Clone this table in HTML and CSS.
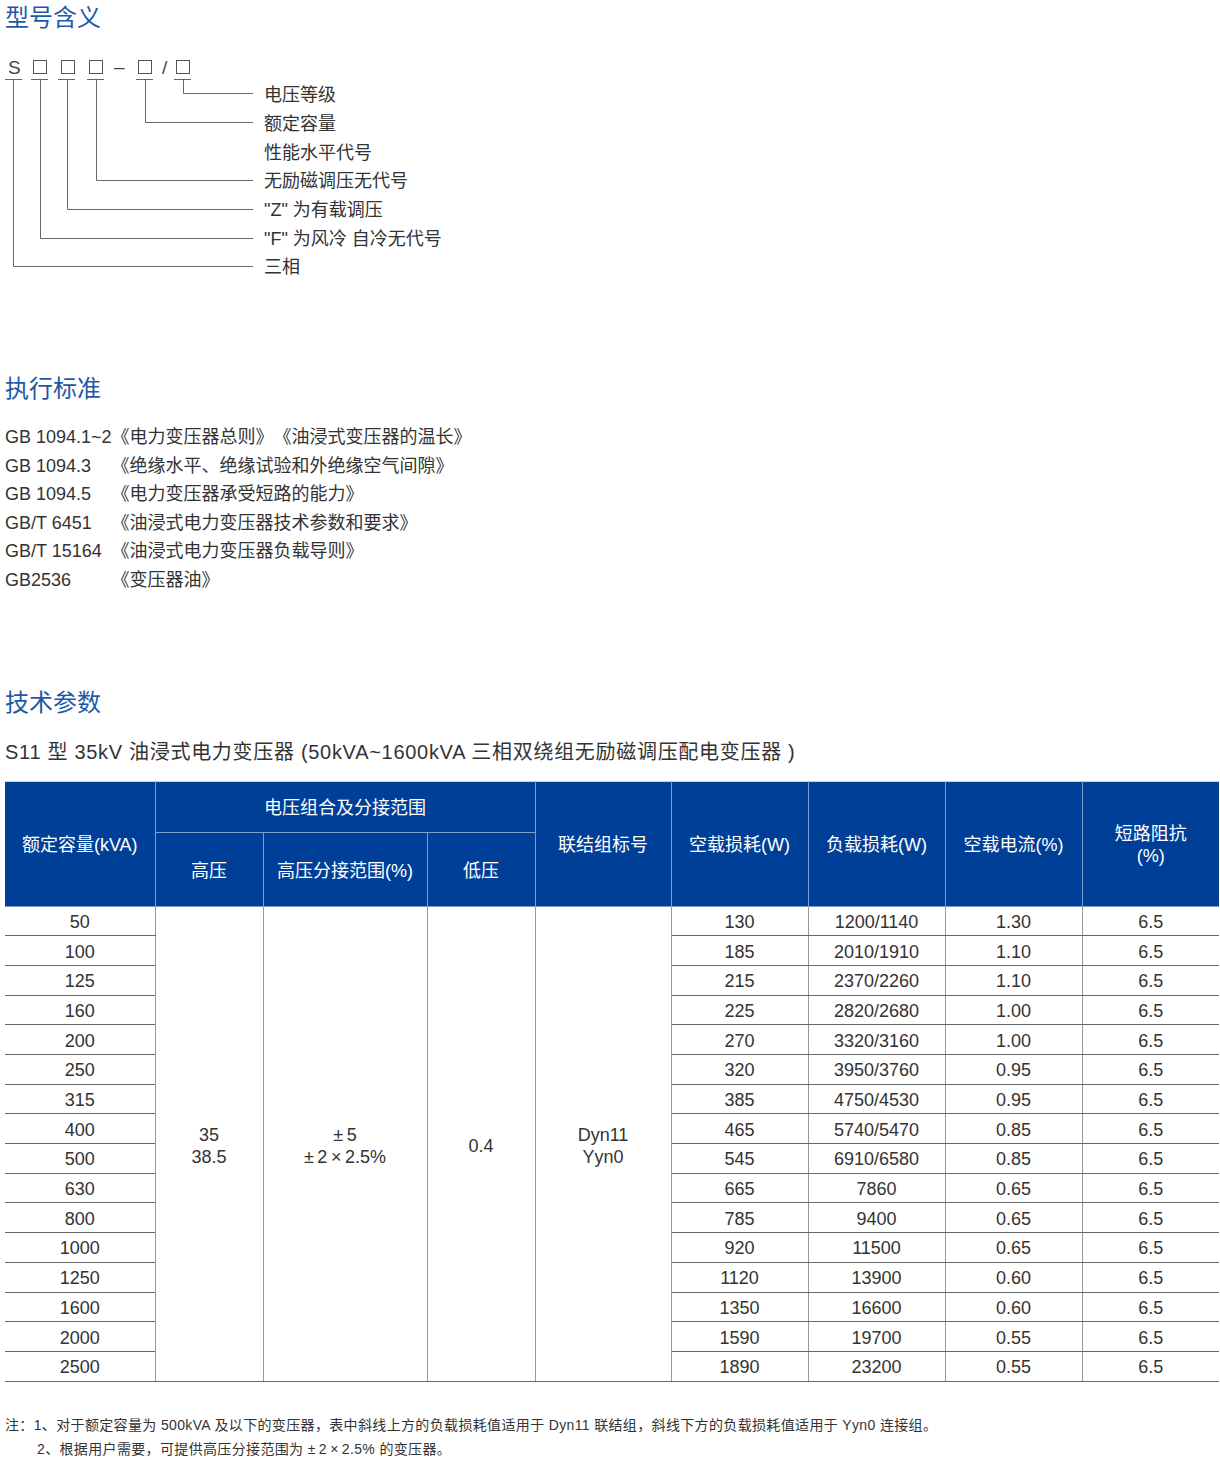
FILE: index.html
```html
<!DOCTYPE html>
<html lang="zh-CN">
<head>
<meta charset="utf-8">
<title>S11 型 35kV 油浸式电力变压器</title>
<link rel="stylesheet" href="styles.css">
</head>
<body>
<section class="sec">
  <h2 class="title">型号含义</h2>
  <svg class="diagram" width="460" height="250" viewBox="5 36 460 250" xmlns="http://www.w3.org/2000/svg">
    <g class="sym">
      <text x="8" y="74">S</text>
      <text x="114" y="73">–</text>
      <text x="162" y="74">/</text>
    </g>
    <g class="box" fill="none" stroke="#555" stroke-width="1">
      <rect x="33.5" y="60.5" width="13" height="13"/>
      <rect x="61.5" y="60.5" width="13" height="13"/>
      <rect x="89.5" y="60.5" width="13" height="13"/>
      <rect x="138.5" y="60.5" width="13" height="13"/>
      <rect x="176.5" y="60.5" width="13" height="13"/>
    </g>
    <g fill="none" stroke="#666" stroke-width="1">
      <path d="M5 79.5H22M31 79.5H48M58 79.5H75M87 79.5H104M136 79.5H153M174 79.5H191"/>
      <path d="M183.5 79V93.5H253"/>
      <path d="M145.5 79V122.5H253"/>
      <path d="M96.5 79V180.5H253"/>
      <path d="M67.5 79V209.5H253"/>
      <path d="M40.5 79V238.5H253"/>
      <path d="M13.5 79V266.5H253"/>
    </g>
    <g class="lbl">
      <text x="264" y="101">电压等级</text>
      <text x="264" y="130">额定容量</text>
      <text x="264" y="159">性能水平代号</text>
      <text x="264" y="187">无励磁调压无代号</text>
      <text x="264" y="216">"Z" 为有载调压</text>
      <text x="264" y="245">"F" 为风冷 自冷无代号</text>
      <text x="264" y="273">三相</text>
    </g>
  </svg>
</section>

<section class="sec sec-std">
  <h2 class="title">执行标准</h2>
  <div class="std">
    <span>GB 1094.1~2</span><span>《电力变压器总则》《油浸式变压器的温长》</span>
    <span>GB 1094.3</span><span>《绝缘水平、绝缘试验和外绝缘空气间隙》</span>
    <span>GB 1094.5</span><span>《电力变压器承受短路的能力》</span>
    <span>GB/T 6451</span><span>《油浸式电力变压器技术参数和要求》</span>
    <span>GB/T 15164</span><span>《油浸式电力变压器负载导则》</span>
    <span>GB2536</span><span>《变压器油》</span>
  </div>
</section>

<section class="sec sec-tech">
  <h2 class="title">技术参数</h2>
  <p class="subtitle">S11 型 35kV 油浸式电力变压器 (50kVA~1600kVA 三相双绕组无励磁调压配电变压器 )</p>
  <table class="spec">
    <colgroup>
      <col style="width:150px"><col style="width:108px"><col style="width:164px"><col style="width:108px"><col style="width:136px"><col style="width:137px"><col style="width:137px"><col style="width:137px"><col style="width:137px">
    </colgroup>
    <thead>
      <tr class="h1">
        <th rowspan="2">额定容量(kVA)</th>
        <th colspan="3">电压组合及分接范围</th>
        <th rowspan="2">联结组标号</th>
        <th rowspan="2">空载损耗(W)</th>
        <th rowspan="2">负载损耗(W)</th>
        <th rowspan="2">空载电流(%)</th>
        <th rowspan="2">短路阻抗<br>(%)</th>
      </tr>
      <tr class="h2">
        <th>高压</th>
        <th>高压分接范围(%)</th>
        <th>低压</th>
      </tr>
    </thead>
    <tbody>
      <tr><td>50</td><td rowspan="16" class="m">35<br>38.5</td><td rowspan="16" class="m">±&thinsp;5<br>±&thinsp;2&thinsp;×&thinsp;2.5%</td><td rowspan="16" class="m">0.4</td><td rowspan="16" class="m">Dyn11<br>Yyn0</td><td>130</td><td>1200/1140</td><td>1.30</td><td>6.5</td></tr>
      <tr><td>100</td><td>185</td><td>2010/1910</td><td>1.10</td><td>6.5</td></tr>
      <tr><td>125</td><td>215</td><td>2370/2260</td><td>1.10</td><td>6.5</td></tr>
      <tr><td>160</td><td>225</td><td>2820/2680</td><td>1.00</td><td>6.5</td></tr>
      <tr><td>200</td><td>270</td><td>3320/3160</td><td>1.00</td><td>6.5</td></tr>
      <tr><td>250</td><td>320</td><td>3950/3760</td><td>0.95</td><td>6.5</td></tr>
      <tr><td>315</td><td>385</td><td>4750/4530</td><td>0.95</td><td>6.5</td></tr>
      <tr><td>400</td><td>465</td><td>5740/5470</td><td>0.85</td><td>6.5</td></tr>
      <tr><td>500</td><td>545</td><td>6910/6580</td><td>0.85</td><td>6.5</td></tr>
      <tr><td>630</td><td>665</td><td>7860</td><td>0.65</td><td>6.5</td></tr>
      <tr><td>800</td><td>785</td><td>9400</td><td>0.65</td><td>6.5</td></tr>
      <tr><td>1000</td><td>920</td><td>11500</td><td>0.65</td><td>6.5</td></tr>
      <tr><td>1250</td><td>1120</td><td>13900</td><td>0.60</td><td>6.5</td></tr>
      <tr><td>1600</td><td>1350</td><td>16600</td><td>0.60</td><td>6.5</td></tr>
      <tr><td>2000</td><td>1590</td><td>19700</td><td>0.55</td><td>6.5</td></tr>
      <tr><td>2500</td><td>1890</td><td>23200</td><td>0.55</td><td>6.5</td></tr>
    </tbody>
  </table>
  <div class="notes">
    <p>注：1、对于额定容量为 500kVA 及以下的变压器，表中斜线上方的负载损耗值适用于 Dyn11 联结组，斜线下方的负载损耗值适用于 Yyn0 连接组。</p>
    <p class="n2">2、根据用户需要，可提供高压分接范围为 ±&thinsp;2&thinsp;×&thinsp;2.5% 的变压器。</p>
  </div>
</section>
</body>
</html>
```
FILE: styles.css
```css
html, body {
  margin: 0;
  padding: 0;
  background: #fff;
}
body {
  padding: 0 1px 0 5px;
  width: 1214px;
  font-family: "Liberation Sans", "Noto Sans CJK SC", sans-serif;
  color: #333;
  text-spacing-trim: space-all;
}
.sec { margin: 0; }
.title {
  margin: 0;
  font-size: 24px;
  line-height: 36px;
  font-weight: normal;
  color: #1d59a6;
}
.diagram {
  display: block;
  font-family: "Liberation Sans", "Noto Sans CJK SC", sans-serif;
}
.diagram .sym text {
  font-size: 19px;
  fill: #444;
}
.diagram .lbl text {
  font-size: 18px;
  fill: #333;
}
.sec-std { margin-top: 85px; }
.std {
  margin-top: 16px;
  display: grid;
  grid-template-columns: max-content max-content;
  font-size: 18px;
  line-height: 28.6px;
  color: #333;
}
.sec-tech { margin-top: 90px; }
.subtitle {
  margin: 16px 0 0;
  font-size: 20px;
  line-height: 30px;
  letter-spacing: 0.7px;
  color: #333;
}
.spec {
  margin-top: 14px;
  width: 1214px;
  table-layout: fixed;
  border-collapse: collapse;
  font-size: 18px;
  color: #333;
}
.spec th {
  background: #003f98;
  color: #fff;
  font-weight: normal;
  line-height: 22px;
  padding: 3px 0 0;
  text-align: center;
  border-left: 1px solid #7f9dcc;
  border-right: 1px solid #7f9dcc;
  border-bottom: 1px solid #7f9dcc;
  border-top: 1px solid #d0d0d0;
}
.spec thead tr.h2 th { border-top: 1px solid #7f9dcc; }
.spec thead th:first-child { border-left: none; }
.spec thead tr.h1 th:last-child { border-right: none; }
.spec tr.h1 { height: 51px; }
.spec tr.h2 { height: 74px; }
.spec td {
  padding: 2px 0 0;
  height: 26.7px;
  line-height: 20px;
  text-align: center;
  vertical-align: middle;
  border-bottom: 1px solid #666;
  border-left: 1px solid #999;
  border-right: 1px solid #999;
}
.spec tbody tr td:first-child { border-left: none; }
.spec tbody tr td:last-child { border-right: none; }
.spec td.m {
  line-height: 22px;
  padding-top: 4px;
}
.notes {
  margin-top: 31px;
  font-size: 14px;
  line-height: 24px;
  letter-spacing: 0.35px;
  color: #333;
}
.notes p { margin: 0; }
.notes .n2 { padding-left: 32px; }
```
